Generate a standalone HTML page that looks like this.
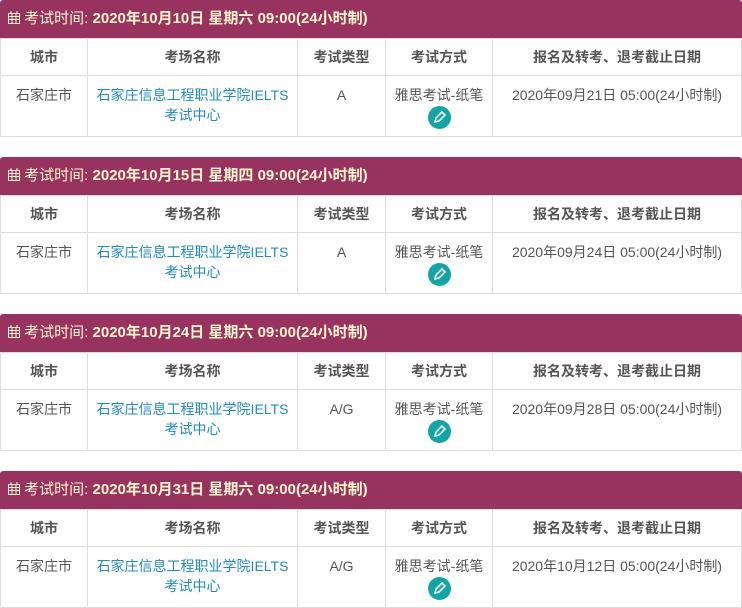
<!DOCTYPE html>
<html><head><meta charset="utf-8"><style>
body{margin:0;background:#fff;font-family:"Liberation Sans","Noto Sans CJK SC",sans-serif;width:742px;height:608px;overflow:hidden}
.blk{position:absolute;left:0;width:742px}
.hd{height:38px;background:#983360;color:#fff7cc;font-size:15px;line-height:38px;padding-left:8px;box-sizing:border-box;border-radius:3px 3px 0 0;white-space:nowrap}
.hd b{font-weight:bold}
table{border-collapse:collapse;width:742px;table-layout:fixed}
td,th{border:1px solid #ddd;text-align:center;font-size:14px;color:#555;padding:0}
th{height:36px;font-weight:bold}
td{height:61px;vertical-align:top;padding-top:9px;box-sizing:border-box;line-height:20px}
a{color:#1e8bc3;text-decoration:none}
.pen{display:inline-block;width:23px;height:23px;border-radius:50%;background:#11a5a6;margin-top:1px;vertical-align:top}
</style></head><body>
<div class="blk" style="top:0">
<div class="hd"><svg width="12" height="13" viewBox="0 0 12 13" style="vertical-align:-1px"><rect x="0.5" y="2.5" width="11" height="10" fill="none" stroke="#fff7cc"/><path d="M3 0v3M9 0v3M0 5.5h12M0 8.5h12M4 3v10M8 3v10" stroke="#fff7cc"/></svg> 考试时间: <b>2020年10月10日 星期六 09:00(24小时制)</b></div>
<table><colgroup><col style="width:87px"><col style="width:210px"><col style="width:88px"><col style="width:107px"><col></colgroup>
<tr><th>城市</th><th>考场名称</th><th>考试类型</th><th>考试方式</th><th>报名及转考、退考截止日期</th></tr>
<tr><td>石家庄市</td><td><a>石家庄信息工程职业学院IELTS<br>考试中心</a></td><td>A</td><td>雅思考试-纸笔<br><span class="pen"><svg width="23" height="23" viewBox="0 0 23 23"><path d="M7 16l1-4 6-6 3 3-6 6z" fill="none" stroke="#fff" stroke-width="1.6"/></svg></span></td><td>2020年09月21日 05:00(24小时制)</td></tr>
</table></div>
<div class="blk" style="top:157px">
<div class="hd"><svg width="12" height="13" viewBox="0 0 12 13" style="vertical-align:-1px"><rect x="0.5" y="2.5" width="11" height="10" fill="none" stroke="#fff7cc"/><path d="M3 0v3M9 0v3M0 5.5h12M0 8.5h12M4 3v10M8 3v10" stroke="#fff7cc"/></svg> 考试时间: <b>2020年10月15日 星期四 09:00(24小时制)</b></div>
<table><colgroup><col style="width:87px"><col style="width:210px"><col style="width:88px"><col style="width:107px"><col></colgroup>
<tr><th>城市</th><th>考场名称</th><th>考试类型</th><th>考试方式</th><th>报名及转考、退考截止日期</th></tr>
<tr><td>石家庄市</td><td><a>石家庄信息工程职业学院IELTS<br>考试中心</a></td><td>A</td><td>雅思考试-纸笔<br><span class="pen"><svg width="23" height="23" viewBox="0 0 23 23"><path d="M7 16l1-4 6-6 3 3-6 6z" fill="none" stroke="#fff" stroke-width="1.6"/></svg></span></td><td>2020年09月24日 05:00(24小时制)</td></tr>
</table></div>
<div class="blk" style="top:314px">
<div class="hd"><svg width="12" height="13" viewBox="0 0 12 13" style="vertical-align:-1px"><rect x="0.5" y="2.5" width="11" height="10" fill="none" stroke="#fff7cc"/><path d="M3 0v3M9 0v3M0 5.5h12M0 8.5h12M4 3v10M8 3v10" stroke="#fff7cc"/></svg> 考试时间: <b>2020年10月24日 星期六 09:00(24小时制)</b></div>
<table><colgroup><col style="width:87px"><col style="width:210px"><col style="width:88px"><col style="width:107px"><col></colgroup>
<tr><th>城市</th><th>考场名称</th><th>考试类型</th><th>考试方式</th><th>报名及转考、退考截止日期</th></tr>
<tr><td>石家庄市</td><td><a>石家庄信息工程职业学院IELTS<br>考试中心</a></td><td>A/G</td><td>雅思考试-纸笔<br><span class="pen"><svg width="23" height="23" viewBox="0 0 23 23"><path d="M7 16l1-4 6-6 3 3-6 6z" fill="none" stroke="#fff" stroke-width="1.6"/></svg></span></td><td>2020年09月28日 05:00(24小时制)</td></tr>
</table></div>
<div class="blk" style="top:471px">
<div class="hd"><svg width="12" height="13" viewBox="0 0 12 13" style="vertical-align:-1px"><rect x="0.5" y="2.5" width="11" height="10" fill="none" stroke="#fff7cc"/><path d="M3 0v3M9 0v3M0 5.5h12M0 8.5h12M4 3v10M8 3v10" stroke="#fff7cc"/></svg> 考试时间: <b>2020年10月31日 星期六 09:00(24小时制)</b></div>
<table><colgroup><col style="width:87px"><col style="width:210px"><col style="width:88px"><col style="width:107px"><col></colgroup>
<tr><th>城市</th><th>考场名称</th><th>考试类型</th><th>考试方式</th><th>报名及转考、退考截止日期</th></tr>
<tr><td>石家庄市</td><td><a>石家庄信息工程职业学院IELTS<br>考试中心</a></td><td>A/G</td><td>雅思考试-纸笔<br><span class="pen"><svg width="23" height="23" viewBox="0 0 23 23"><path d="M7 16l1-4 6-6 3 3-6 6z" fill="none" stroke="#fff" stroke-width="1.6"/></svg></span></td><td>2020年10月12日 05:00(24小时制)</td></tr>
</table></div>
</body></html>
